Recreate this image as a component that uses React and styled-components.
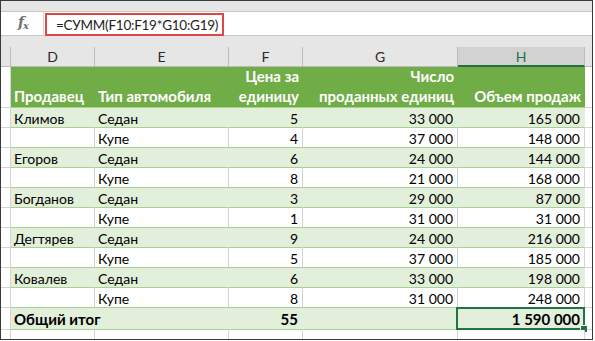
import styled, { createGlobalStyle } from "styled-components";

const GlobalStyle = createGlobalStyle`
  * { box-sizing: border-box; }
  body {
    margin: 0;
    background: #fff;
    font-family: Lato, "Open Sans", sans-serif;
  }
`;

const COLS = [
  { key: "D", width: 84 },
  { key: "E", width: 134 },
  { key: "F", width: 74, right: true },
  { key: "G", width: 155, right: true },
  { key: "H", width: 127, right: true },
];

const rows = [
  ["Климов", "Седан", "5", "33 000", "165 000"],
  ["", "Купе", "4", "37 000", "148 000"],
  ["Егоров", "Седан", "6", "24 000", "144 000"],
  ["", "Купе", "8", "21 000", "168 000"],
  ["Богданов", "Седан", "3", "29 000", "87 000"],
  ["", "Купе", "1", "31 000", "31 000"],
  ["Дегтярев", "Седан", "9", "24 000", "216 000"],
  ["", "Купе", "5", "37 000", "185 000"],
  ["Ковалев", "Седан", "6", "33 000", "198 000"],
  ["", "Купе", "8", "31 000", "248 000"],
];

const header = [
  ["Продавец"],
  ["Тип автомобиля"],
  ["Цена за", "единицу"],
  ["Число", "проданных единиц"],
  ["Объем продаж"],
];

export default function App() {
  return (
    <>
      <GlobalStyle />
      <Frame>
        <TopBand />
        <FormulaBar>
          <FxBox>
            <Fx>
              f<sub>x</sub>
            </Fx>
          </FxBox>
          <FormulaInput>
            <Formula>=СУММ(F10:F19*G10:G19)</Formula>
          </FormulaInput>
        </FormulaBar>
        <Gap />
        <Sheet>
          <Row $h={20}>
            <Corner />
            {COLS.map((c) => (
              <ColHead key={c.key} $w={c.width} $active={c.key === "H"}>
                {c.key}
              </ColHead>
            ))}
            <ColFill />
          </Row>

          <Row $h={41}>
            <RowHead />
            {header.map((lines, i) => (
              <HeadCell key={i} $w={COLS[i].width} $right={COLS[i].right}>
                {lines.map((l) => (
                  <span key={l}>{l}</span>
                ))}
              </HeadCell>
            ))}
            <Filler />
          </Row>

          {rows.map((r, i) => (
            <Row key={i} $h={20}>
              <RowHead />
              {r.map((v, j) => (
                <Cell key={j} $w={COLS[j].width} $right={COLS[j].right} $band={i % 2 === 0}>
                  {v}
                </Cell>
              ))}
              <Filler />
            </Row>
          ))}

          <Row $h={22}>
            <RowHead />
            <Cell $w={218} $band $bold>
              Общий итог
            </Cell>
            <Cell $w={74} $band $right $bold>
              55
            </Cell>
            <Cell $w={155} $band />
            <Cell $w={127} $band $right $bold $selected>
              1 590 000
            </Cell>
            <Filler />
          </Row>

          <Row $h={20}>
            <RowHead />
            {COLS.map((c) => (
              <Cell key={c.key} $w={c.width} $empty />
            ))}
            <Filler />
          </Row>
        </Sheet>
      </Frame>
    </>
  );
}

const Frame = styled.div`
  width: 593px;
  height: 340px;
  border: 1px solid #3a3a3a;
  background: #e6e6e6;
  overflow: hidden;
  display: flex;
  flex-direction: column;
`;

const TopBand = styled.div`
  flex: none;
  height: 10px;
  background: #e6e6e6;
`;

const FormulaBar = styled.div`
  flex: none;
  height: 25px;
  display: flex;
  background: #fff;
  border-top: 1px solid #c6c6c6;
  border-bottom: 1px solid #c6c6c6;
`;

const FxBox = styled.div`
  width: 43px;
  display: flex;
  align-items: center;
  justify-content: center;
  padding: 0 0 2px 2px;
  border-right: 1px solid #d6d6d6;
`;

const Fx = styled.span`
  font-family: "DejaVu Serif", serif;
  font-style: italic;
  font-weight: 700;
  font-size: 14px;
  color: #6e6e6e;
  letter-spacing: -1px;
  sub {
    font-size: 10px;
    vertical-align: -2px;
  }
`;

const FormulaInput = styled.div`
  flex: 1;
  display: flex;
  align-items: stretch;
  padding: 1px 0 0 1px;
`;

const Formula = styled.div`
  width: 179px;
  margin-bottom: -1px;
  border: 2px solid #e04545;
  padding-left: 9px;
  display: flex;
  align-items: center;
  font-size: 13.5px;
  letter-spacing: -0.25px;
  color: #222;
  white-space: nowrap;
`;

const Gap = styled.div`
  flex: none;
  height: 11px;
`;

const Sheet = styled.div`
  flex: 1;
  min-height: 0;
  background: #fff;
  font-size: 14px;
  color: #000;
`;

const Row = styled.div`
  display: flex;
  height: ${(p) => p.$h}px;
`;

const Corner = styled.div`
  width: 10px;
  background: #e6e6e6;
  border-right: 1px solid #bcbcbc;
  border-bottom: 1px solid #bcbcbc;
`;

const ColHead = styled.div`
  width: ${(p) => p.$w}px;
  display: flex;
  align-items: center;
  justify-content: center;
  background: ${(p) => (p.$active ? "#d2d2d2" : "#e6e6e6")};
  color: ${(p) => (p.$active ? "#217346" : "#2a2a2a")};
  border-right: 1px solid #bcbcbc;
  border-bottom: ${(p) => (p.$active ? "2px solid #217346" : "1px solid #bcbcbc")};
  font-size: 14px;
`;

const ColFill = styled.div`
  flex: 1;
  background: #e6e6e6;
  border-bottom: 1px solid #bcbcbc;
`;

const RowHead = styled.div`
  width: 10px;
  background: #fff;
  border-right: 1px solid #d4d4d4;
  border-bottom: 1px solid #d4d4d4;
`;

const Filler = styled.div`
  flex: 1;
  border-bottom: 1px solid #d4d4d4;
`;

const HeadCell = styled.div`
  width: ${(p) => p.$w}px;
  background: #70ad47;
  color: #fff;
  font-weight: 700;
  font-size: 15px;
  display: flex;
  flex-direction: column;
  justify-content: flex-end;
  align-items: ${(p) => (p.$right ? "flex-end" : "flex-start")};
  padding: 0 4px 1px 3px;
  line-height: 20px;
  border-bottom: 1px solid #a9d08e;
  white-space: nowrap;
`;

const Cell = styled.div`
  position: relative;
  width: ${(p) => p.$w}px;
  display: flex;
  align-items: center;
  justify-content: ${(p) => (p.$right ? "flex-end" : "flex-start")};
  padding: 1px 4px 0 3px;
  background: ${(p) => (p.$band ? "#e2efda" : "#fff")};
  font-weight: ${(p) => (p.$bold ? 700 : 400)};
  font-size: ${(p) => (p.$bold ? "15px" : "14px")};
  border-right: 1px solid ${(p) => (p.$band ? "#e2efda" : "#d4d4d4")};
  border-bottom: 1px solid ${(p) => (p.$empty ? "#d4d4d4" : "#a9d08e")};
  white-space: nowrap;

  ${(p) =>
    p.$selected &&
    `
    &::before {
      content: "";
      position: absolute;
      inset: -1px -1px -1px -2px;
      border: 2px solid #217346;
    }
    &::after {
      content: "";
      position: absolute;
      right: -4px;
      bottom: -4px;
      width: 6px;
      height: 6px;
      background: #217346;
      border: 1px solid #fff;
    }
  `}
`;
